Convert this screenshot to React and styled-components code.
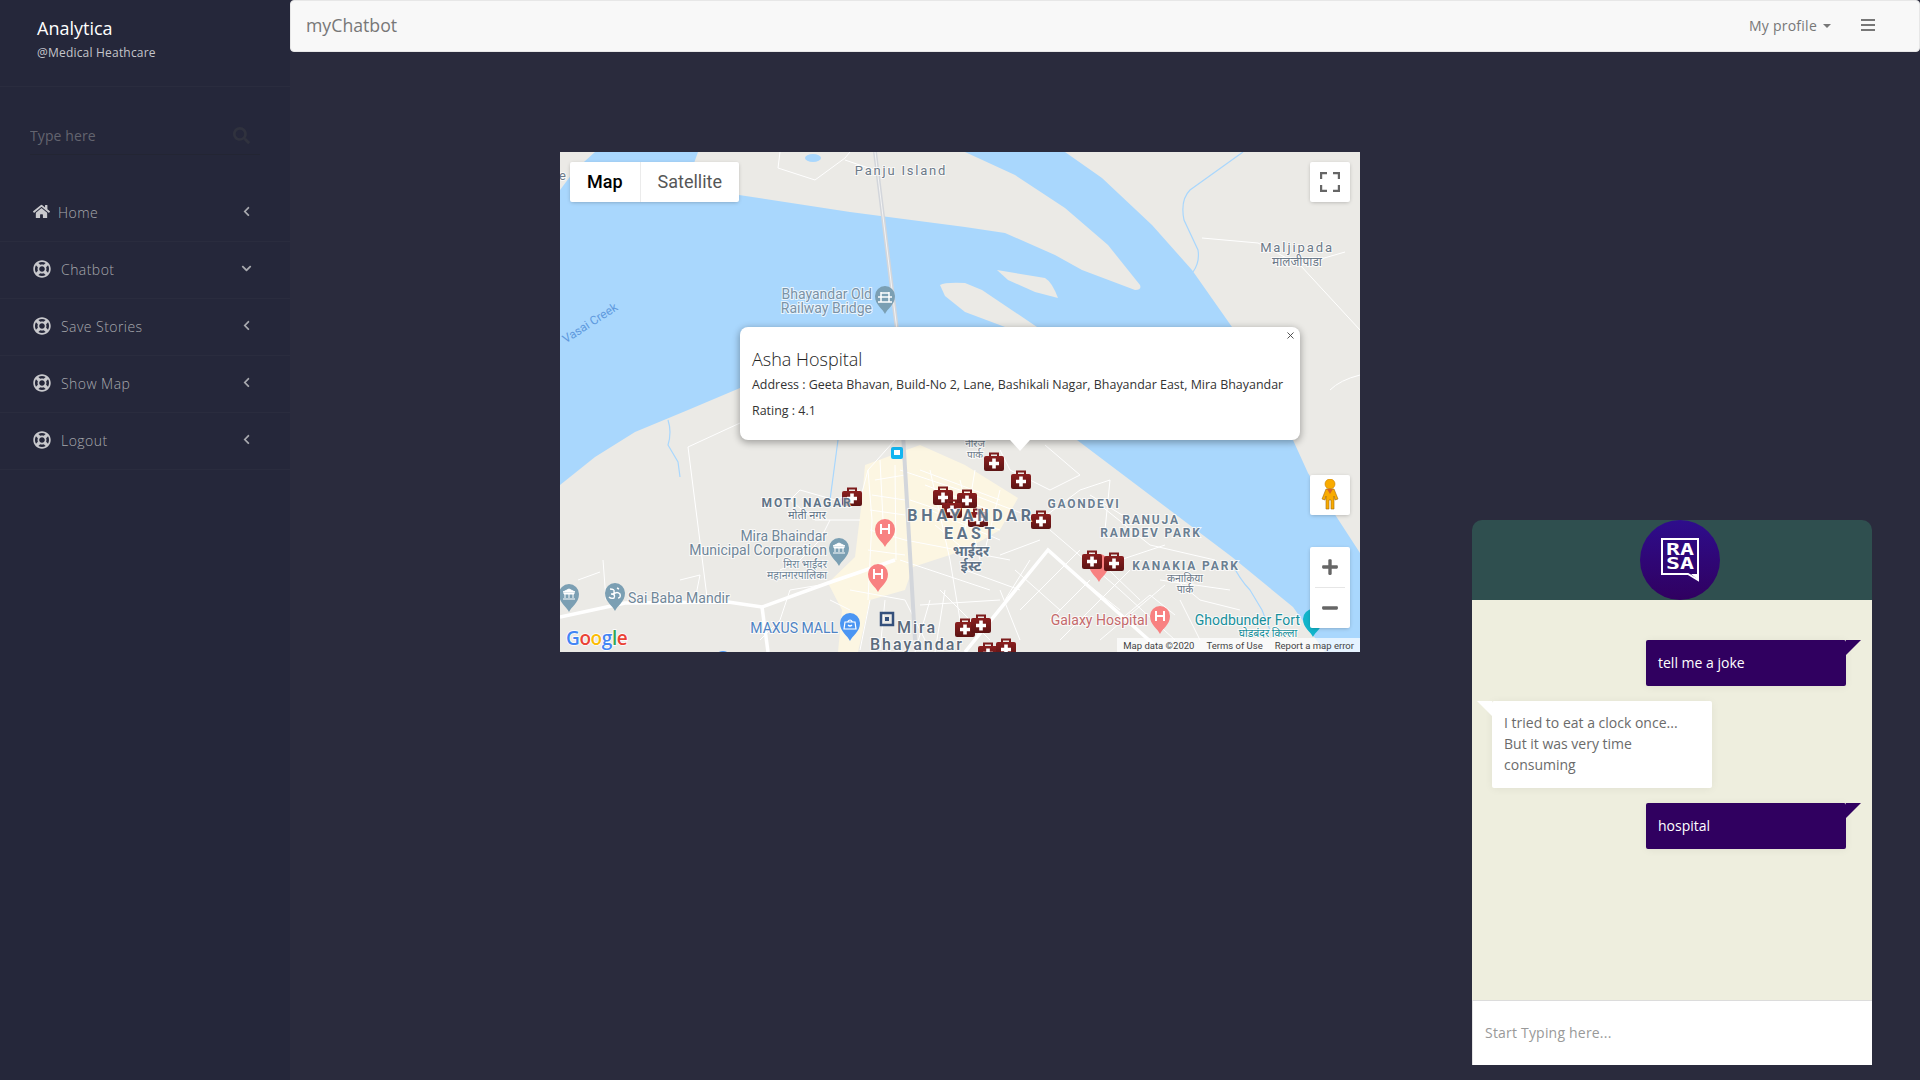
import React from 'react';
import styled, { createGlobalStyle } from 'styled-components';
import { FaHome, FaRegLifeRing, FaChevronLeft, FaChevronDown, FaSearch, FaPlus, FaMinus } from 'react-icons/fa';
import { X } from 'lucide-react';

const GlobalStyle = createGlobalStyle`
  html, body { margin: 0; padding: 0; height: 100%; }
  body {
    background: #2a2b3d;
    font-family: "Open Sans", "Liberation Sans", sans-serif;
    overflow: hidden;
  }
`;

const menuItems = [
  { label: 'Home', icon: 'home' },
  { label: 'Chatbot', open: true },
  { label: 'Save Stories' },
  { label: 'Show Map' },
  { label: 'Logout' },
];

// everything on the map is in page coordinates, see the viewBox
const waterPath = 'M595 152 L698 152 L688 180 L700 186 L739 195 L850 212 L965 227 L1005 233 L1055 255 L1082 270 L1135 290 Q1142 290 1140 285 L1108 245 L1065 208 L1015 175 L965 152 L1065 152 L1102 178 L1152 225 L1192 270 L1232 327 L1293 440 L1308 473 L1360 553 L1360 652 L1325 652 L1293 607 L1232 557 L1077 440 L1000 400 L740 388 L688 410 L635 432 L595 457 L560 485 L560 190 L575 170 Z';
const islands = [
  'M997 270 L1045 278 Q1052 282 1058 298 L1035 292 L1008 280 Z',
  'M940 285 Q945 282 965 283 L982 290 L1037 327 L1005 327 L965 312 L945 296 Z',
];
const streams = [
  'M1243 152 L1190 190 Q1180 200 1184 220 L1198 250 Q1200 262 1193 272',
  'M668 420 Q672 432 668 445 L678 462 L680 477',
  'M838 440 L830 500',
  'M1230 560 Q1240 580 1250 590 L1262 610 L1270 630',
];
const urbanPath = 'M865 465 L920 445 L965 465 L1018 498 L1000 530 L965 550 L913 567 L905 590 L870 600 L858 652 L838 652 L842 610 L828 583 L855 557 L862 500 Z';
const smallRoads = [
  'M740 423 L688 447 L707 597', 'M860 490 L835 500 L800 490 L790 500 L815 520 L860 520',
  'M868 470 L872 520 L868 600', 'M895 440 L868 470 L860 500', 'M900 470 L960 490 L1040 520',
  'M910 500 L1000 530', 'M905 540 L1010 560', 'M900 560 L990 590', 'M930 470 L950 560 L960 620',
  'M960 480 L980 560', 'M1000 450 L1010 470 L1050 490 L1080 475 L1045 445', 'M1040 520 L1080 490 L1110 480 L1105 530',
  'M1050 530 L1120 590 L1175 640', 'M1020 610 L1080 550', 'M1060 640 L1130 570', 'M1100 640 L1165 585',
  'M1100 505 L1150 545 L1215 560', 'M1170 575 L1200 600 L1240 610', 'M780 570 L800 560 L820 540 L830 520',
  'M940 590 L990 640', 'M920 605 L1000 600', 'M1000 590 L1020 640', 'M1202 238 L1258 243 L1300 265 L1360 330',
  'M1300 265 L1345 252', 'M1330 390 Q1340 380 1360 375', 'M780 152 L778 168 L815 180 L845 158 L850 152',
  'M845 160 L880 172', 'M760 640 L780 620 L790 590 L820 585', 'M830 600 L850 610',
  'M578 580 L600 572 M603 560 L606 600', 'M680 580 L700 575 L695 600', 'M875 480 L905 475 M872 495 L905 500 M870 510 L905 515 M870 530 L905 540 M868 550 L905 555',
  'M880 460 L884 540 M895 465 L896 560', 'M920 470 L1000 500 M925 485 L990 510 M930 510 L1000 540 M935 525 L965 550',
  'M975 470 L965 530 M1000 490 L985 550', 'M850 590 L905 600 L925 640 M870 600 L860 650 M885 600 L880 650',
  'M930 600 L915 652 M945 590 L935 652 M965 570 L1020 590 M1000 555 L1040 540', 'M1030 560 L1005 600 M1015 570 L1060 610',
  'M1072 572 L1120 610 M1090 552 L1140 600 M1050 620 L1090 580', 'M1120 620 L1150 595 L1175 615', 'M1090 495 L1130 520',
  'M1180 600 L1200 640 M1160 580 L1230 590', 'M1120 560 L1165 545',
];
const mainRoads = [
  'M965 652 L1048 550 L1160 650',
  'M560 617 L625 603 L728 602 L762 607 L828 583 L895 560',
  'M762 607 L768 652',
];
const medKits = [
  [852, 497], [943, 496], [967, 499], [952, 509], [978, 518], [994, 462], [1021, 480], [1041, 520],
  [1092, 560], [1114, 562], [965, 628], [981, 624], [988, 652], [1006, 648],
];
const pins = [
  { x: 885, y: 300, color: '#7b9fb3', glyph: 'bridge' },
  { x: 839, y: 552, color: '#7b9fb3', glyph: 'museum' },
  { x: 569, y: 598, color: '#7b9fb3', glyph: 'museum' },
  { x: 615, y: 597, color: '#7b9fb3', glyph: 'om' },
  { x: 885, y: 533, color: '#f88181', glyph: 'H' },
  { x: 878, y: 578, color: '#f88181', glyph: 'H' },
  { x: 1160, y: 620, color: '#f88181', glyph: 'H' },
  { x: 1099, y: 568, color: '#f88181', glyph: '' },
  { x: 850, y: 627, color: '#4b96f3', glyph: 'bag' },
  { x: 1313, y: 623, color: '#12b5cb', glyph: '' },
];
const mapLabels = [
  { t: 'Panju Island', x: 901, y: 175, ls: 1.8 },
  { t: 'Bhayandar Old', x: 872, y: 299, a: 'end', c: '#7a92a6', s: 14 },
  { t: 'Railway Bridge', x: 872, y: 313, a: 'end', c: '#7a92a6', s: 14 },
  { t: 'Maljipada', x: 1297, y: 252, ls: 1.9 },
  { t: 'मालजीपाडा', x: 1297, y: 266, s: 12 },
  { t: 'MOTI NAGAR', x: 807, y: 507, w: 700, s: 12, ls: 1.8, c: '#5f7387' },
  { t: 'मोती नगर', x: 807, y: 519, s: 11, c: '#5f7387' },
  { t: 'Mira Bhaindar', x: 827, y: 541, a: 'end', s: 14, c: '#6f8698' },
  { t: 'Municipal Corporation', x: 827, y: 555, a: 'end', s: 14, c: '#6f8698' },
  { t: 'मिरा भाईंदर', x: 827, y: 568, a: 'end', s: 10.5, c: '#6f8698' },
  { t: 'महानगरपालिका', x: 827, y: 579, a: 'end', s: 10.5, c: '#6f8698' },
  { t: 'Sai Baba Mandir', x: 628, y: 603, a: 'start', s: 14, c: '#6f8698' },
  { t: 'MAXUS MALL', x: 838, y: 633, a: 'end', s: 14, c: '#4e83c4' },
  { t: 'Mira', x: 917, y: 633, w: 500, s: 16, ls: 2, c: '#5b6b7c' },
  { t: 'Bhayandar', x: 917, y: 650, w: 500, s: 16, ls: 2, c: '#5b6b7c' },
  { t: 'BHAYANDAR', x: 971, y: 521, w: 700, s: 16, ls: 3.8, c: '#5f7387' },
  { t: 'EAST', x: 971, y: 539, w: 700, s: 16, ls: 3.6, c: '#5f7387' },
  { t: 'भाईंदर', x: 971, y: 556, w: 700, s: 14, c: '#5f7387' },
  { t: 'ईस्ट', x: 971, y: 571, w: 700, s: 14, c: '#5f7387' },
  { t: 'नीरज', x: 975, y: 447, s: 10 },
  { t: 'पार्क', x: 975, y: 458, s: 10 },
  { t: 'GAONDEVI', x: 1084, y: 508, w: 700, s: 12, ls: 1.8, c: '#6b7f92' },
  { t: 'RANUJA', x: 1151, y: 524, w: 700, s: 12, ls: 1.8, c: '#6b7f92' },
  { t: 'RAMDEV PARK', x: 1151, y: 537, w: 700, s: 12, ls: 1.8, c: '#6b7f92' },
  { t: 'KANAKIA PARK', x: 1186, y: 570, w: 700, s: 12, ls: 1.9, c: '#6b7f92' },
  { t: 'कनाकिया', x: 1185, y: 582, s: 10.5 },
  { t: 'पार्क', x: 1185, y: 593, s: 10.5 },
  { t: 'Galaxy Hospital', x: 1148, y: 625, a: 'end', s: 14, c: '#c4696b' },
  { t: 'Ghodbunder Fort', x: 1300, y: 625, a: 'end', s: 14, c: '#17909c' },
  { t: 'घोडबंदर किल्ला', x: 1268, y: 637, s: 10.5, c: '#17909c' },
];

const MedKit = ({ x, y }) => (
  <g transform={`translate(${x - 10} ${y - 10})`}>
    <path d="M6 4 V1.5 H14 V4" fill="none" stroke="#7d1c1c" strokeWidth="2" />
    <rect y="4" width="20" height="15" rx="2" fill="url(#kitFill)" />
    <path d="M8.2 6.5 H11.8 V9.7 H15 V13.3 H11.8 V16.5 H8.2 V13.3 H5 V9.7 H8.2 Z" fill="#fff" />
  </g>
);

const Pin = ({ x, y, color, glyph }) => (
  <g transform={`translate(${x} ${y})`}>
    <path d="M0 14 C-2 9 -10 5 -10 -4 A10 10 0 1 1 10 -4 C10 5 2 9 0 14 Z" fill={color} />
    {glyph === 'H' && <path d="M-4 -9 V1 M4 -9 V1 M-4 -4 H4" stroke="#fff" strokeWidth="2" />}
    {glyph === 'museum' && <path d="M-6 -6 L0 -9 L6 -6 Z M-5 -5 H5 V-4 H-5 Z M-4 -4 V0 M0 -4 V0 M4 -4 V0 M-6 1 H6" fill="#fff" stroke="#fff" />}
    {glyph === 'bridge' && <path d="M-7 -3 H7 M-4 -8 V2 M4 -8 V2 M-4 -7 H4 M-7 2 H7" stroke="#fff" strokeWidth="1.5" fill="none" />}
    {glyph === 'om' && <path d="M-5 -8 Q0 -8 -1 -5 Q0 -3 -4 -3 Q1 -3 -1 1 Q-4 2 -6 0 M-1 -3 Q2 -6 5 -3 Q6 1 3 1 M2 -9 L4 -8" stroke="#fff" strokeWidth="1.4" fill="none" />}
    {glyph === 'bag' && <path d="M-5 -5 H5 L6 2 H-6 Z M-2.5 -5 Q0 -9 2.5 -5 M-2 -2 Q0 0 2 -2" stroke="#fff" strokeWidth="1.2" fill="none" />}
  </g>
);

const MapDrawing = () => (
  <MapSvg viewBox="560 152 800 500">
    <defs>
      <linearGradient id="kitFill" x1="0" y1="0" x2="0" y2="1">
        <stop offset="0" stopColor="#8a1f1f" />
        <stop offset="1" stopColor="#5c1414" />
      </linearGradient>
    </defs>
    <rect x="560" y="152" width="800" height="500" fill="#ebeae6" />
    <path d={urbanPath} fill="#fcf6e2" />
    <path d={waterPath} fill="#a9d7fd" />
    {islands.map(d => <path key={d} d={d} fill="#ebeae6" />)}
    <ellipse cx="813" cy="158" rx="8" ry="4" fill="#a9d7fd" />
    {streams.map(d => <path key={d} d={d} fill="none" stroke="#a9d7fd" strokeWidth="1.2" />)}
    {smallRoads.map(d => <path key={d} d={d} fill="none" stroke="#fff" strokeWidth="1" />)}
    {mainRoads.map(d => <path key={d} d={d} fill="none" stroke="#fff" strokeWidth="3.5" />)}
    <path d="M875 152 L897 330 L915 640" fill="none" stroke="#d3d6db" strokeWidth="4" />
    <path d="M875 152 L897 330" fill="none" stroke="#f3f3f3" strokeWidth="1" />
    <rect x="891" y="447" width="12" height="12" rx="2" fill="#12b5f0" />
    <path d="M894 450 H900 V455 H894 Z" fill="#fff" />
    <rect x="881" y="613" width="12" height="12" fill="none" stroke="#34507c" strokeWidth="2.5" />
    <rect x="885" y="617" width="4" height="4" fill="#34507c" />
    <circle cx="723" cy="660" r="9" fill="#4b96f3" />
    {pins.map(p => <Pin key={`${p.x}-${p.y}`} {...p} />)}
    {medKits.map(([x, y]) => <MedKit key={`${x}-${y}`} x={x} y={y} />)}
    {mapLabels.map(l => (
      <MapText
        key={`${l.t}-${l.x}`}
        x={l.x}
        y={l.y}
        textAnchor={l.a || 'middle'}
        fontSize={l.s || 13}
        fontWeight={l.w || 400}
        letterSpacing={l.ls || 0}
        fill={l.c || '#6c7a89'}
      >
        {l.t}
      </MapText>
    ))}
    <CreekText x="590" y="327" textAnchor="middle" transform="rotate(-33 590 323)">Vasai Creek</CreekText>
    <MapText x="559" y="180" fontSize="13" fill="#6c7a89">e</MapText>
    <GoogleMark x="566" y="645">
      <tspan fill="#4285f4">G</tspan>
      <tspan fill="#ea4335">o</tspan>
      <tspan fill="#fbbc05">o</tspan>
      <tspan fill="#4285f4">g</tspan>
      <tspan fill="#34a853">l</tspan>
      <tspan fill="#ea4335">e</tspan>
    </GoogleMark>
  </MapSvg>
);

const RasaLogo = () => (
  <svg width="38" height="44" viewBox="0 0 38 44">
    <path d="M1 1 H37 V36 V42 L27 36 H1 Z" fill="none" stroke="#fff" strokeWidth="2" />
    <path d="M30 36 L36 41 V36 Z" fill="#fff" />
    <LogoText x="19" y="17" textLength="28" lengthAdjust="spacingAndGlyphs">RA</LogoText>
    <LogoText x="19" y="31" textLength="28" lengthAdjust="spacingAndGlyphs">SA</LogoText>
  </svg>
);

const Pegman = () => (
  <svg width="18" height="32" viewBox="0 0 18 32">
    <circle cx="9" cy="5" r="5" fill="#f9ab00" stroke="#c77f00" strokeWidth="0.6" />
    <path d="M5 10 H13 L17 20 L14 21 L13 17 V30 H10 V21 H8 V30 H5 V17 L4 21 L1 20 Z" fill="#f9ab00" stroke="#a06a10" strokeWidth="0.6" />
    <path d="M6 10 H12 L9 15 Z" fill="#d4662a" />
  </svg>
);

const FullscreenIcon = () => (
  <svg width="20" height="20" viewBox="-1 -1 20 20">
    <path d="M0 6 V0 H6 M12 0 H18 V6 M18 12 V18 H12 M6 18 H0 V12" fill="none" stroke="#666" strokeWidth="2.4" />
  </svg>
);

const App = () => {
  return (
    <Page>
      <GlobalStyle />
      <Sidebar>
        <Brand>
          <BrandName>Analytica</BrandName>
          <BrandSub>@Medical Heathcare</BrandSub>
        </Brand>
        <SearchBox>
          <SearchInput placeholder="Type here" />
          <FaSearch size={17} color="#30323e" />
        </SearchBox>
        <Menu>
          {menuItems.map(item => (
            <MenuRow key={item.label}>
              {item.icon === 'home' ? <HomeIcon /> : <RingIcon />}
              <MenuLabel>{item.label}</MenuLabel>
              {item.open ? <FaChevronDown size={11} /> : <FaChevronLeft size={11} />}
            </MenuRow>
          ))}
        </Menu>
      </Sidebar>
      <Main>
        <Navbar>
          <NavTitle>myChatbot</NavTitle>
          <NavRight>
            <ProfileLink>My profile<Caret /></ProfileLink>
            <Burger><span /><span /><span /></Burger>
          </NavRight>
        </Navbar>
        <MapFrame>
          <MapDrawing />
          <MapTypes>
            <MapType $active>Map</MapType>
            <MapType>Satellite</MapType>
          </MapTypes>
          <MapButton $top={10} $height={40}><FullscreenIcon /></MapButton>
          <MapButton $top={323} $height={40}><Pegman /></MapButton>
          <ZoomBox>
            <ZoomButton><FaPlus size={18} /></ZoomButton>
            <ZoomRule />
            <ZoomButton><FaMinus size={18} /></ZoomButton>
          </ZoomBox>
          <Attribution>
            <span>Map data ©2020</span>
            <span>Terms of Use</span>
            <span>Report a map error</span>
          </Attribution>
          <InfoWindow>
            <CloseMark><X size={11} strokeWidth={2} /></CloseMark>
            <InfoTitle>Asha Hospital</InfoTitle>
            <InfoLine>Address : Geeta Bhavan, Build-No 2, Lane, Bashikali Nagar, Bhayandar East, Mira Bhayandar</InfoLine>
            <InfoLine>Rating : 4.1</InfoLine>
          </InfoWindow>
        </MapFrame>
      </Main>
      <ChatWidget>
        <ChatHead>
          <Avatar><RasaLogo /></Avatar>
        </ChatHead>
        <ChatBody>
          <UserBubble>tell me a joke</UserBubble>
          <BotBubble>I tried to eat a clock once... But it was very time consuming</BotBubble>
          <UserBubble>hospital</UserBubble>
        </ChatBody>
        <ChatInput placeholder="Start Typing here..." />
      </ChatWidget>
    </Page>
  );
};

const Page = styled.div`
  display: flex;
  width: 1920px;
  height: 1080px;
  overflow: hidden;
`;

const Sidebar = styled.aside`
  flex: 0 0 290px;
  background: #25273a;
`;

const Brand = styled.div`
  height: 87px;
  padding: 16px 0 0 37px;
  box-sizing: border-box;
  border-bottom: 1px solid #2a2c3e;
`;

const BrandName = styled.div`
  font-size: 18px;
  line-height: 25px;
  color: #fff;
`;

const BrandSub = styled.div`
  font-size: 12px;
  line-height: 23px;
  letter-spacing: 0.2px;
  color: #c4c5ca;
`;

const SearchBox = styled.div`
  display: flex;
  align-items: center;
  margin: 29px 30px 0;
  height: 38px;
  padding-right: 10px;
  border-bottom: 1px solid #232533;
`;

const SearchInput = styled.input`
  flex: 1;
  min-width: 0;
  padding: 0;
  border: 0;
  outline: 0;
  background: transparent;
  font: 14px "Open Sans", sans-serif;
  letter-spacing: 0.1px;
  color: #888;
  &::placeholder { color: #63646f; opacity: 1; }
`;

const Menu = styled.nav`
  margin-top: 30px;
`;

const MenuRow = styled.div`
  display: flex;
  align-items: center;
  padding: 0 38px 3px 33px;
  box-sizing: border-box;
  height: 57px;
  border-bottom: 1px solid #2a2c3e;
  color: #a8a9ae;
  font-size: 14px;
`;

const MenuLabel = styled.span`
  flex: 1;
  margin-top: 2px;
  letter-spacing: 0.45px;
  font-weight: 300;
`;

const HomeIcon = styled(FaHome)`
  width: 17px;
  height: 17px;
  margin-right: 8px;
  color: #c9c9cd;
`;

const RingIcon = styled(FaRegLifeRing)`
  width: 18px;
  height: 18px;
  margin-right: 10px;
  color: #c9c9cd;
`;

const Main = styled.main`
  flex: 1;
  min-width: 0;
`;

const Navbar = styled.header`
  display: flex;
  align-items: center;
  justify-content: space-between;
  height: 52px;
  padding: 0 44px 2px 15px;
  box-sizing: border-box;
  background: #f8f8f8;
  border: 1px solid #e7e7e7;
  border-radius: 4px;
`;

const NavTitle = styled.div`
  font-size: 17.7px;
  color: #777;
`;

const NavRight = styled.div`
  display: flex;
  align-items: center;
  gap: 30px;
`;

const ProfileLink = styled.div`
  display: flex;
  align-items: center;
  font-size: 14px;
  letter-spacing: 0.25px;
  color: #777;
`;

const Caret = styled.i`
  margin-left: 6px;
  margin-top: 2px;
  border-top: 4px solid #777;
  border-left: 4px solid transparent;
  border-right: 4px solid transparent;
`;

const Burger = styled.div`
  display: flex;
  flex-direction: column;
  gap: 3px;
  width: 14px;
  span { height: 2px; background: #777; }
`;

const MapFrame = styled.div`
  position: relative;
  width: 800px;
  height: 500px;
  margin: 100px 0 0 270px;
  overflow: hidden;
`;

const MapSvg = styled.svg`
  display: block;
  width: 800px;
  height: 500px;
  font-family: Roboto, "Noto Sans", sans-serif;
`;

const MapText = styled.text`
  paint-order: stroke;
  stroke: rgba(255, 255, 255, 0.75);
  stroke-width: 2px;
`;

const CreekText = styled.text`
  font-size: 12px;
  fill: #5f9ade;
`;

const GoogleMark = styled.text`
  font-family: "Open Sans", sans-serif;
  font-size: 19px;
  font-weight: 600;
  letter-spacing: -0.4px;
  paint-order: stroke;
  stroke: #fff;
  stroke-width: 1.5px;
`;

const LogoText = styled.text`
  font-family: "DejaVu Sans Mono", monospace;
  font-size: 16px;
  font-weight: 700;
  text-anchor: middle;
  fill: #fff;
`;

const MapTypes = styled.div`
  position: absolute;
  top: 10px;
  left: 10px;
  display: flex;
  height: 40px;
  background: #fff;
  border-radius: 2px;
  box-shadow: 0 1px 4px -1px rgba(0, 0, 0, 0.3);
`;

const MapType = styled.div`
  display: flex;
  align-items: center;
  padding: 0 17px 2px;
  font: ${p => (p.$active ? 500 : 400)} 18px Roboto, sans-serif;
  color: ${p => (p.$active ? '#000' : '#565656')};
  border-right: ${p => (p.$active ? '1px solid #ebebeb' : '0')};
`;

const MapButton = styled.div`
  position: absolute;
  top: ${p => p.$top}px;
  right: 10px;
  display: flex;
  align-items: center;
  justify-content: center;
  width: 40px;
  height: ${p => p.$height}px;
  background: #fff;
  border-radius: 2px;
  box-shadow: 0 1px 4px -1px rgba(0, 0, 0, 0.3);
`;

const ZoomBox = styled.div`
  position: absolute;
  top: 395px;
  right: 10px;
  width: 40px;
  height: 81px;
  background: #fff;
  border-radius: 2px;
  box-shadow: 0 1px 4px -1px rgba(0, 0, 0, 0.3);
`;

const ZoomButton = styled.div`
  display: flex;
  align-items: center;
  justify-content: center;
  height: 40px;
  color: #666;
`;

const ZoomRule = styled.div`
  height: 1px;
  margin: 0 5px;
  background: #e6e6e6;
`;

const Attribution = styled.div`
  position: absolute;
  right: 0;
  bottom: 0;
  display: flex;
  height: 14px;
  align-items: center;
  background: rgba(255, 255, 255, 0.7);
  font: 9.5px Roboto, sans-serif;
  color: #444;
  span { padding: 0 6px; }
`;

const InfoWindow = styled.div`
  position: absolute;
  top: 175px;
  left: 180px;
  width: 560px;
  height: 113px;
  padding: 19px 12px 0;
  box-sizing: border-box;
  background: #fff;
  border-radius: 8px;
  box-shadow: 0 2px 7px 1px rgba(0, 0, 0, 0.3);
  &::after {
    content: '';
    position: absolute;
    top: 100%;
    left: 270px;
    border-top: 11px solid #fff;
    border-left: 10px solid transparent;
    border-right: 10px solid transparent;
  }
`;

const CloseMark = styled.div`
  position: absolute;
  top: 3px;
  right: 4px;
  display: flex;
  color: #444;
`;

const InfoTitle = styled.div`
  font-size: 18px;
  font-weight: 300;
  line-height: 26px;
  color: #222;
`;

const InfoLine = styled.div`
  font-size: 12.45px;
  line-height: 26px;
  white-space: nowrap;
  color: #333;
`;

const ChatWidget = styled.section`
  position: absolute;
  left: 1472px;
  top: 520px;
  display: flex;
  flex-direction: column;
  width: 400px;
  height: 545px;
`;

const ChatHead = styled.div`
  display: flex;
  justify-content: center;
  flex: 0 0 80px;
  background: #2f4f4f;
  border-radius: 10px 10px 0 0;
`;

const Avatar = styled.div`
  display: flex;
  align-items: center;
  justify-content: center;
  width: 80px;
  height: 80px;
  margin-left: 16px;
  border-radius: 50%;
  background: linear-gradient(#2e0d8c, #300060);
`;

const ChatBody = styled.div`
  flex: 1;
  display: flex;
  flex-direction: column;
  gap: 15px;
  padding-top: 40px;
  background: #eeeede;
`;

const Bubble = styled.div`
  position: relative;
  box-sizing: border-box;
  padding: 12px;
  font-size: 14px;
  line-height: 21px;
  border-radius: 2px;
  box-shadow: 0 1px 8px rgba(0, 0, 0, 0.06);
  &::after {
    content: '';
    position: absolute;
    top: 0;
    width: 0;
    height: 0;
    border-top: 15px solid;
  }
`;

const UserBubble = styled(Bubble)`
  align-self: flex-end;
  width: 200px;
  min-height: 46px;
  margin-right: 26px;
  background: #300060;
  color: #fff;
  &::after {
    left: 100%;
    border-top-color: #300060;
    border-right: 15px solid transparent;
  }
`;

const BotBubble = styled(Bubble)`
  align-self: flex-start;
  width: 220px;
  margin-left: 20px;
  padding: 11px 12px 13px;
  background: #fff;
  color: #6b6b6b;
  &::after {
    right: 100%;
    border-top-color: #fff;
    border-left: 15px solid transparent;
  }
`;

const ChatInput = styled.input`
  flex: 0 0 65px;
  box-sizing: border-box;
  width: 100%;
  padding: 0 12px 2px;
  border: 0;
  border-top: 1px solid #dcdcdc;
  border-left: 1px solid #e4e4e4;
  outline: 0;
  background: #fff;
  font: 14px "Open Sans", sans-serif;
  letter-spacing: 0.2px;
  &::placeholder { color: #999; opacity: 1; }
`;

export default App;
